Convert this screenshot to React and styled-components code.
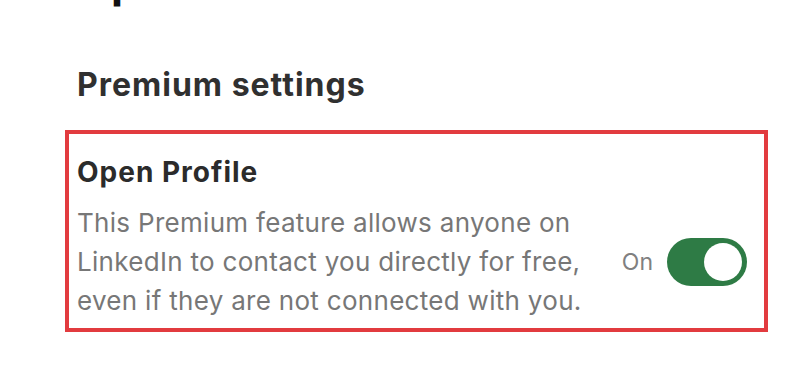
import React from 'react'
import styled, { createGlobalStyle } from 'styled-components'

const GlobalStyle = createGlobalStyle`
  html, body {
    margin: 0;
    padding: 0;
    background: #fff;
  }
  body {
    font-family: Inter, "Noto Sans", "Liberation Sans", sans-serif;
    overflow: hidden;
  }
`

const Page = styled.main`
  width: 805px;
  height: 368px;
  padding-left: 65px;
  box-sizing: border-box;
  overflow: hidden;
`

const PageTitle = styled.h1`
  margin: -42px 0 0 12px;
  font-size: 44px;
  line-height: 48px;
  font-weight: 700;
  color: #111;
`

const SectionTitle = styled.h2`
  margin: 60px 0 26px 12px;
  font-size: 32px;
  line-height: 38px;
  font-weight: 650;
  letter-spacing: 1px;
  color: #303030;
`

const SettingCard = styled.section`
  width: 703px;
  box-sizing: border-box;
  border: 4px solid #e23b3f;
  padding: 22px 17px 8px 8px;
`

const SettingName = styled.h3`
  margin: 0 0 15px;
  font-size: 28px;
  line-height: 32px;
  font-weight: 650;
  letter-spacing: 1px;
  color: #2b2b2b;
`

const SettingRow = styled.div`
  display: flex;
  align-items: center;
  justify-content: space-between;
`

const Description = styled.p`
  margin: 0;
  width: 515px;
  font-size: 26px;
  line-height: 39px;
  letter-spacing: 0.3px;
  color: #777;
`

const Control = styled.label`
  display: flex;
  align-items: center;
  gap: 14px;
  font-size: 23px;
  color: #808080;
`

const Track = styled.span`
  position: relative;
  display: block;
  width: 80px;
  height: 48px;
  border-radius: 24px;
  background: ${p => (p.$on ? '#2e7b45' : '#8c8c8c')};
`

const Knob = styled.span`
  position: absolute;
  top: 5px;
  left: ${p => (p.$on ? '37px' : '5px')};
  width: 38px;
  height: 38px;
  border-radius: 50%;
  background: #fff;
`

export default function App() {
  const on = true
  return (
    <Page>
      <GlobalStyle />
      <PageTitle>Open Profile</PageTitle>
      <SectionTitle>Premium settings</SectionTitle>
      <SettingCard>
        <SettingName>Open Profile</SettingName>
        <SettingRow>
          <Description>
            This Premium feature allows anyone on LinkedIn to contact you directly for free, even if they are not connected with you.
          </Description>
          <Control>
            {on ? 'On' : 'Off'}
            <Track $on={on}>
              <Knob $on={on} />
            </Track>
          </Control>
        </SettingRow>
      </SettingCard>
    </Page>
  )
}
